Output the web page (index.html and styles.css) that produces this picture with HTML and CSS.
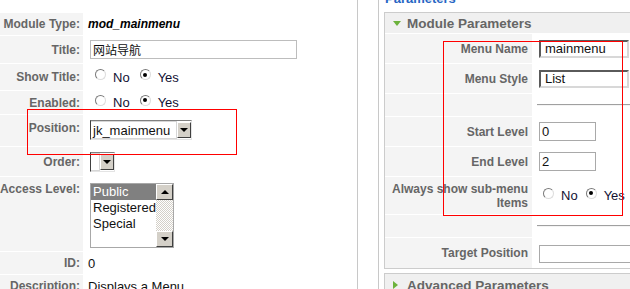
FILE: index.html
```html
<!DOCTYPE html>
<html lang="en">
<head>
    <meta charset="UTF-8">
    <title>Module: mod_mainmenu</title>
    <link rel="stylesheet" href="styles.css">
</head>
<body>
    <div class="page">
        <div class="details">
            <div class="form">
                <div class="key">Module Type:</div>
                <div class="val"><b class="modtype">mod_mainmenu</b></div>

                <div class="key">Title:</div>
                <div class="val"><span class="textbox title-box">网站导航</span></div>

                <div class="key">Show Title:</div>
                <div class="val radios">
                    <span class="radio"></span><span class="rlabel">No</span>
                    <span class="radio on"></span><span class="rlabel">Yes</span>
                </div>

                <div class="key">Enabled:</div>
                <div class="val radios">
                    <span class="radio"></span><span class="rlabel">No</span>
                    <span class="radio on"></span><span class="rlabel">Yes</span>
                </div>

                <div class="key key-up">Position:</div>
                <div class="val">
                    <div class="combo combo-pos">
                        <span class="combo-text">jk_mainmenu</span>
                        <span class="combo-btn"><i class="arrow-down"></i></span>
                    </div>
                </div>

                <div class="key">Order:</div>
                <div class="val">
                    <div class="combo combo-order">
                        <span class="combo-text"></span>
                        <span class="combo-btn"><i class="arrow-down"></i></span>
                    </div>
                </div>

                <div class="key key-top">Access Level:</div>
                <div class="val val-top">
                    <div class="listbox">
                        <div class="options">
                            <div class="opt sel">Public</div>
                            <div class="opt">Registered</div>
                            <div class="opt">Special</div>
                        </div>
                        <div class="scroll">
                            <span class="sbtn"><i class="arrow-up"></i></span>
                            <span class="sbtn"><i class="arrow-down"></i></span>
                        </div>
                    </div>
                </div>

                <div class="key">ID:</div>
                <div class="val">0</div>

                <div class="key">Description:</div>
                <div class="val">Displays a Menu</div>
            </div>
        </div>

        <div class="gutter"></div>

        <div class="params">
            <div class="legend">Parameters</div>

            <div class="pane">
                <div class="pane-head"><i class="tri-down"></i>Module Parameters</div>
                <div class="pform">
                    <div class="pkey">Menu Name</div>
                    <div class="pval"><span class="field field-wide">mainmenu</span></div>

                    <div class="pkey">Menu Style</div>
                    <div class="pval"><span class="field field-wide">List</span></div>

                    <div class="pkey"></div>
                    <div class="pval"><div class="rule"></div></div>

                    <div class="pkey">Start Level</div>
                    <div class="pval"><span class="smallbox">0</span></div>

                    <div class="pkey">End Level</div>
                    <div class="pval"><span class="smallbox">2</span></div>

                    <div class="pkey">Always show sub-menu<br>Items</div>
                    <div class="pval radios radios-right">
                        <span class="radio"></span><span class="rlabel">No</span>
                        <span class="radio on"></span><span class="rlabel">Yes</span>
                    </div>

                    <div class="pkey"></div>
                    <div class="pval"><div class="rule"></div></div>

                    <div class="pkey">Target Position</div>
                    <div class="pval"><span class="smallbox target"></span></div>
                </div>
            </div>

            <div class="pane pane-closed">
                <div class="pane-head"><i class="tri-right"></i>Advanced Parameters</div>
            </div>
        </div>
    </div>

    <div class="mark mark-left"></div>
    <div class="mark mark-right"></div>
</body>
</html>
```

FILE: styles.css
```css
*{
    margin: 0;
    padding: 0;
    box-sizing: border-box;
}
body{
    width: 630px;
    height: 289px;
    overflow: hidden;
    position: relative;
    background-color: #ffffff;
    color: #111111;
    font-family: "Liberation Sans", Arial, sans-serif;
    font-size: 13px;
}
i{
    display: block;
}
.page{
    display: flex;
    align-items: flex-start;
    height: 289px;
}

/* left column */
.details{
    flex: none;
    width: 358px;
    height: 289px;
    padding-top: 13px;
    border-right: 1px solid #c8c8c8;
}
.form{
    display: grid;
    grid-template-columns: 83px 1fr;
    grid-template-rows: 22px 27px 26px 23px 31px 29px 74px 22px 22px;
    gap: 1px;
}
.key{
    display: flex;
    align-items: center;
    justify-content: flex-end;
    padding-right: 3px;
    background-color: #f4f4f4;
    color: #666666;
    font-size: 12px;
    font-weight: bold;
    white-space: nowrap;
}
.key-up{
    padding-bottom: 5px;
}
.key-top{
    align-items: flex-start;
    padding-top: 5px;
}
.val{
    display: flex;
    align-items: center;
    padding-left: 4px;
    white-space: nowrap;
}
.val-top{
    align-items: flex-start;
    padding-top: 6px;
}
.modtype{
    font-size: 12px;
    font-style: italic;
    color: #000000;
}
.textbox{
    display: flex;
    align-items: center;
    height: 19px;
    margin-left: 2px;
    padding-left: 2px;
    border: 1px solid #bdbdbd;
    background-color: #ffffff;
}
.title-box{
    width: 207px;
    font-family: "Noto Sans CJK SC", sans-serif;
    font-size: 12px;
}

/* radios */
.radio{
    flex: none;
    width: 11px;
    height: 11px;
    margin-bottom: 5px;
    border-radius: 50%;
    border: 1px solid;
    border-color: #7a7a7a #dcdcdc #dcdcdc #7a7a7a;
    background-color: #ffffff;
    display: flex;
    align-items: center;
    justify-content: center;
}
.radio.on::after{
    content: "";
    width: 4px;
    height: 4px;
    border-radius: 50%;
    background-color: #000000;
}
.radios .radio:first-child{
    margin-left: 7px;
}
.rlabel{
    margin-left: 7px;
    margin-right: 10px;
    color: #111133;
}
.radios-right .radio:first-child{
    margin-left: 4px;
}
.radios-right .rlabel{
    margin-right: 8px;
}

/* combos */
.combo{
    display: flex;
    height: 20px;
    margin-left: 2px;
    border: 1px solid;
    border-color: #808080 #e4e4e4 #e4e4e4 #404040;
    background-color: #ffffff;
}
.combo-pos{
    width: 102px;
    margin-bottom: 2px;
}
.combo-order{
    width: 25px;
}
.combo-text{
    flex: 1;
    padding-left: 2px;
    line-height: 17px;
    border: 1px solid #d6d6d6;
    border-left: none;
}
.combo-btn{
    flex: none;
    width: 14px;
    margin: 1px 0;
    display: flex;
    align-items: center;
    justify-content: center;
    background-color: #d4d0c8;
    border: 1px solid;
    border-color: #ffffff #404040 #404040 #ffffff;
}
.arrow-down{
    border-left: 4px solid transparent;
    border-right: 4px solid transparent;
    border-top: 4px solid #000000;
}
.arrow-up{
    border-left: 4px solid transparent;
    border-right: 4px solid transparent;
    border-bottom: 4px solid #000000;
}

/* listbox */
.listbox{
    display: flex;
    width: 84px;
    height: 65px;
    margin-left: 2px;
    border: 1px solid #a8a8a8;
    background-color: #ffffff;
}
.options{
    flex: 1;
}
.opt{
    height: 16px;
    line-height: 16px;
    padding-left: 2px;
}
.opt.sel{
    background-color: #808080;
    color: #ffffff;
}
.scroll{
    flex: none;
    width: 17px;
    display: flex;
    flex-direction: column;
    justify-content: space-between;
    background: repeating-conic-gradient(#ffffff 0 25%, #d4d0c8 0 50%) 0 0 / 2px 2px;
}
.sbtn{
    height: 16px;
    display: flex;
    align-items: center;
    justify-content: center;
    background-color: #d4d0c8;
    border: 1px solid;
    border-color: #ffffff #404040 #404040 #ffffff;
}

/* right column */
.gutter{
    flex: none;
    width: 20px;
}
.params{
    flex: none;
    width: 320px;
    height: 289px;
    padding-left: 5px;
    border-left: 1px solid #c8c8c8;
}
.legend{
    margin-top: -8px;
    margin-bottom: 6px;
    padding-left: 1px;
    line-height: 14px;
    color: #2666c4;
    font-size: 13px;
    font-weight: bold;
}
.pane{
    width: 300px;
    border: 1px solid #cccccc;
}
.pane-closed{
    margin-top: 4px;
}
.pane-head{
    display: flex;
    align-items: center;
    height: 20px;
    padding-left: 8px;
    background-color: #f0f0f0;
    color: #666666;
    font-size: 13.5px;
    font-weight: bold;
}
.pane-closed .pane-head{
    height: 22px;
}
.tri-down{
    margin-right: 6px;
    border-left: 4px solid transparent;
    border-right: 4px solid transparent;
    border-top: 5px solid #6cb23c;
}
.tri-right{
    margin-right: 9px;
    border-top: 4px solid transparent;
    border-bottom: 4px solid transparent;
    border-left: 5px solid #6cb23c;
}
.pform{
    display: grid;
    grid-template-columns: 147px 1fr;
    grid-template-rows: 29px 29px 22px 29px 29px 37px 22px 30px;
    gap: 1px;
    padding-top: 1px;
}
.pkey{
    display: flex;
    align-items: center;
    justify-content: flex-end;
    padding-right: 4px;
    background-color: #f4f4f4;
    color: #666666;
    font-size: 12px;
    font-weight: bold;
    line-height: 14px;
    text-align: right;
}
.pval{
    display: flex;
    align-items: center;
    padding-left: 6px;
    white-space: nowrap;
}
.field{
    display: flex;
    align-items: center;
    height: 18px;
    padding-left: 4px;
    border: 2px solid;
    border-color: #5a5a5a #d8d8d8 #d8d8d8 #5a5a5a;
    background-color: #ffffff;
}
.field-wide{
    width: 90px;
}
.smallbox{
    display: flex;
    align-items: center;
    width: 57px;
    height: 19px;
    padding-left: 2px;
    border: 1px solid #a9a9a9;
    background-color: #ffffff;
}
.smallbox.target{
    width: 100px;
    height: 18px;
    margin-top: 1px;
}
.rule{
    width: 100%;
    height: 2px;
    margin-left: -2px;
    border-top: 1px solid #a0a0a0;
    border-bottom: 1px solid #f4f4f4;
}

/* red annotation boxes drawn over the form */
.mark{
    position: absolute;
    border: 1px solid #ff0000;
}
.mark-left{
    left: 27px;
    top: 109px;
    width: 210px;
    height: 46px;
}
.mark-right{
    left: 443px;
    top: 41px;
    width: 180px;
    height: 175px;
}
```
